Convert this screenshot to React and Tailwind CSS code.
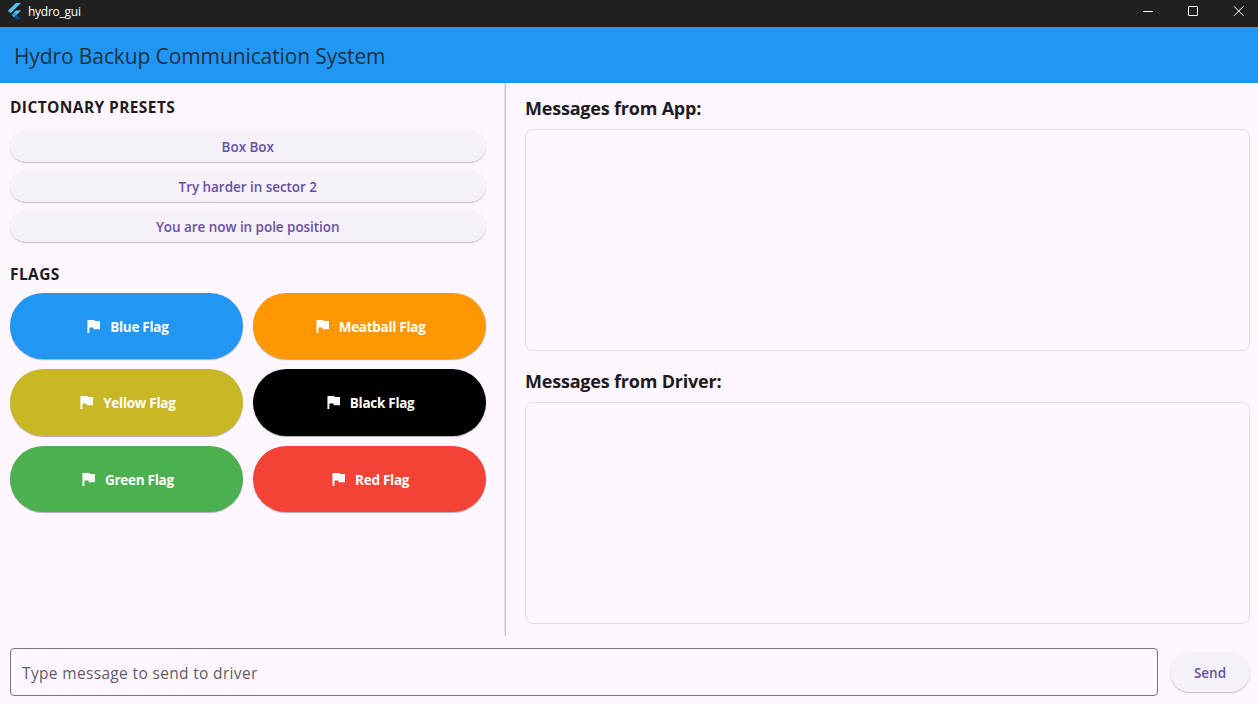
const presets = [
  "Box Box",
  "Try harder in sector 2",
  "You are now in pole position",
];

const flags = [
  { label: "Blue Flag", color: "bg-[#2196f3]" },
  { label: "Meatball Flag", color: "bg-[#ff9800]" },
  { label: "Yellow Flag", color: "bg-[#c9b726]" },
  { label: "Black Flag", color: "bg-black" },
  { label: "Green Flag", color: "bg-[#4caf50]" },
  { label: "Red Flag", color: "bg-[#f44336]" },
];

function FlutterLogo() {
  return (
    <svg className="h-4 w-[13px]" viewBox="0 0 13 16">
      <path d="M8 0h5L2.6 10.3 0 7.8z" fill="#54c5f8" />
      <path d="M8 7.4h5L8.4 11.9 5.9 9.5z" fill="#54c5f8" />
      <path d="M3.5 11.9 6 9.4l2.5 2.5L6 14.4z" fill="#29a0e0" />
      <path d="m6 14.4 2.5-2.5L13 16H8z" fill="#01579b" />
    </svg>
  );
}

function FlagIcon() {
  return (
    <svg className="h-[18px] w-[18px]" viewBox="0 0 24 24" fill="currentColor">
      <path d="M14.4 5.3 14 4H4.6v17.2h2.6V14h5.4l.4 2.3h8.3V5.3z" />
    </svg>
  );
}

function TitleBar() {
  return (
    <header className="flex h-[27px] items-start justify-between bg-[#202020] text-white">
      <div className="flex items-center gap-[7px] pt-[3px] pl-2">
        <FlutterLogo />
        <span className="h-4 text-[12px] leading-[18px] tracking-[-0.25px]">hydro_gui</span>
      </div>
      <div className="flex pt-[6px] pr-[14px]">
        <svg className="h-[10px] w-[101px]" viewBox="0 0 101 10" fill="none" stroke="currentColor">
          <path d="M0 5.5h10" />
          <rect x="45.5" y="0.5" width="9" height="9" rx="0.5" />
          <path d="m91 0.3 9.5 9.5m0-9.5L91 9.8" />
        </svg>
      </div>
    </header>
  );
}

function MessagePanel({ title }) {
  return (
    <section className="flex flex-col">
      <h2 className="h-[27px] text-[18px] leading-[27px] font-bold tracking-[-0.2px] whitespace-nowrap">{title}</h2>
      <div className="mt-[7px] h-[222px] rounded-lg border border-[#e3dde5]" />
    </section>
  );
}

export default function App() {
  return (
    <div className="flex h-[704px] w-[1258px] flex-col overflow-hidden bg-[#fef7ff] font-['Open_Sans','Noto_Sans',sans-serif] text-[#1d1b20]">
      <TitleBar />
      <div className="flex h-14 items-center bg-[#2196f3] pl-[14px]">
        <h1 className="pt-px text-[21px] leading-7 font-normal tracking-[-0.11px] whitespace-nowrap text-[#1d1b20]/85">Hydro Backup Communication System</h1>
      </div>
      <main className="flex h-[553px]">
        <div className="w-[504px] pt-3 pr-[18.5px] pl-[10px]">
          <h2 className="h-6 text-[15.5px] leading-6 font-bold tracking-[0.4px] whitespace-nowrap">DICTONARY PRESETS</h2>
          <div className="mt-[11px] flex flex-col gap-2">
            {presets.map((label) => (
              <button
                key={label}
                className="h-8 rounded-full bg-[#f7f2fa] text-[13.5px] leading-[34px] font-semibold tracking-[-0.05px] text-[#6750a4] shadow-[0_1px_1px_rgba(0,0,0,0.24)]"
              >
                {label}
              </button>
            ))}
          </div>
          <h2 className="mt-5 h-6 text-[15.5px] leading-6 font-bold tracking-[0.4px]">FLAGS</h2>
          <div className="mt-[7.1px] grid grid-cols-2 gap-x-[10px] gap-y-[10.1px]">
            {flags.map((f) => (
              <button
                key={f.label}
                className={"flex h-[66.2px] items-center justify-center gap-2 rounded-full text-[13.5px] font-bold text-white shadow-[0_1px_1px_rgba(0,0,0,0.3)] " + f.color}
              >
                <FlagIcon />
                <span className="pt-[2px] leading-5 tracking-[-0.28px]">{f.label}</span>
              </button>
            ))}
          </div>
        </div>
        <div className="w-[2px] border-l border-[#e6dfe8] bg-[#cfc8d2]" />
        <div className="flex flex-col gap-[17px] pt-3 pl-[19px] [&>section]:w-[725px]">
          <MessagePanel title="Messages from App:" />
          <MessagePanel title="Messages from Driver:" />
        </div>
      </main>
      <footer className="flex items-center gap-3 pt-3 pl-[10px]">
        <input
          className="h-12 w-[1148px] rounded border border-[#79747e] bg-transparent px-[11px] pt-px text-[15.5px] font-normal tracking-[0.34px] outline-none placeholder:text-[#49454f]/90"
          placeholder="Type message to send to driver"
        />
        <button className="h-10 w-20 rounded-full bg-[#f7f2fa] pt-[2px] text-[13.5px] font-semibold tracking-[0px] text-[#6750a4] shadow-[0_1px_1px_rgba(0,0,0,0.24)]">
          Send
        </button>
      </footer>
    </div>
  );
}
